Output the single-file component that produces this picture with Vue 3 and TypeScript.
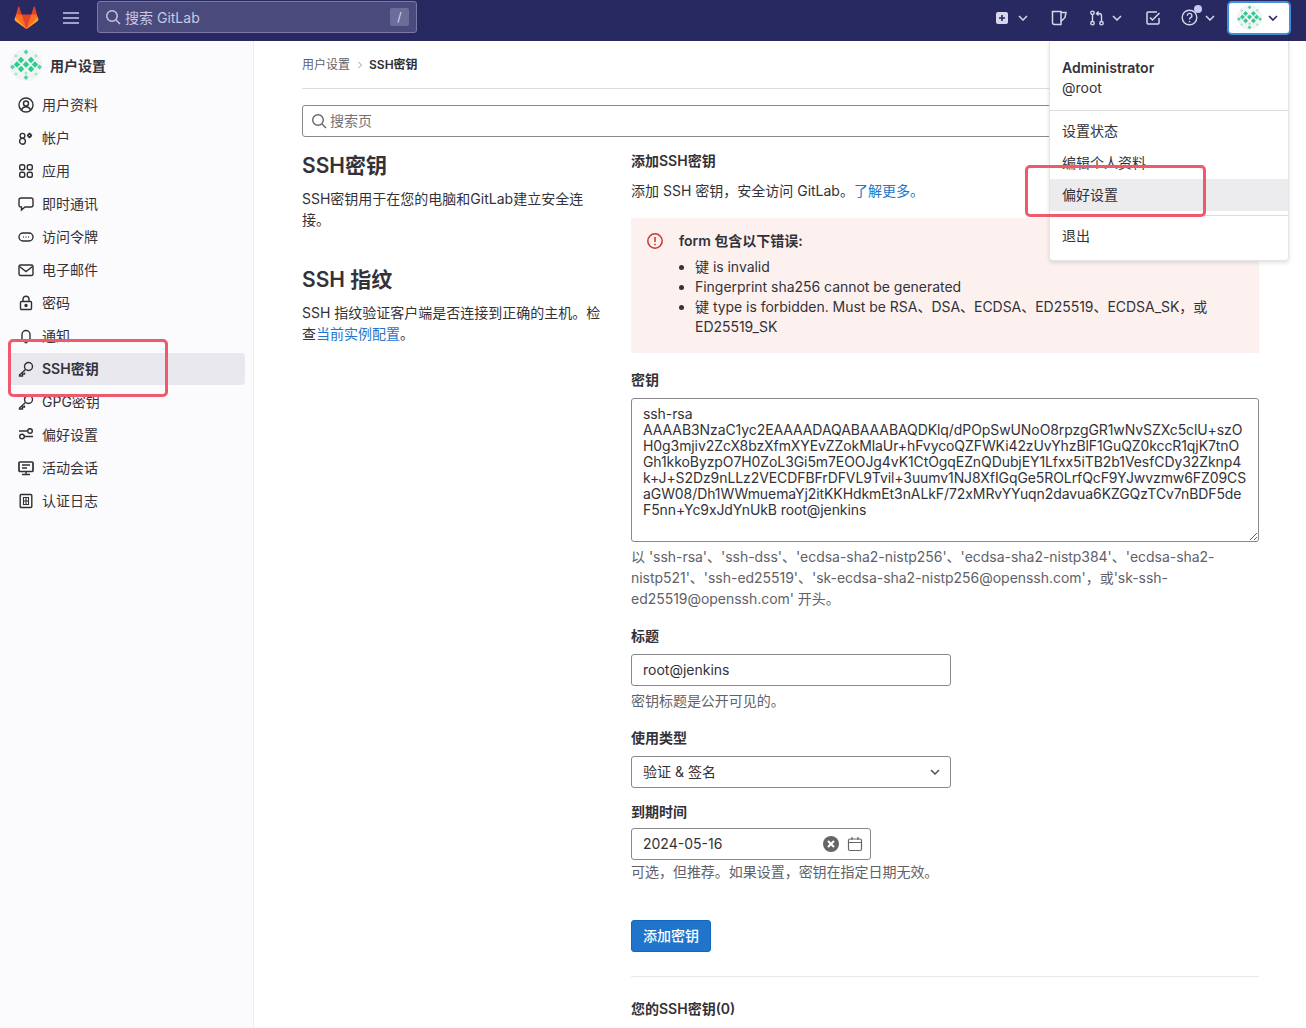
<script setup lang="ts">
const navItems: { label: string; icon: string; active?: boolean }[] = [
  { label: '用户资料', icon: 'profile' },
  { label: '帐户', icon: 'account' },
  { label: '应用', icon: 'apps' },
  { label: '即时通讯', icon: 'chat' },
  { label: '访问令牌', icon: 'token' },
  { label: '电子邮件', icon: 'mail' },
  { label: '密码', icon: 'lock' },
  { label: '通知', icon: 'bell' },
  { label: 'SSH密钥', icon: 'key', active: true },
  { label: 'GPG密钥', icon: 'key' },
  { label: '偏好设置', icon: 'prefs' },
  { label: '活动会话', icon: 'monitor' },
  { label: '认证日志', icon: 'log' },
]
const keyText = `ssh-rsa
AAAAB3NzaC1yc2EAAAADAQABAAABAQDKlq/dPOpSwUNoO8rpzgGR1wNvSZXc5clU+szO
H0g3mjiv2ZcX8bzXfmXYEvZZokMlaUr+hFvycoQZFWKi42zUvYhzBlF1GuQZ0kccR1qjK7tnO
Gh1kkoByzpO7H0ZoL3Gi5m7EOOJg4vK1CtOgqEZnQDubjEY1Lfxx5iTB2b1VesfCDy32Zknp4
k+J+S2Dz9nLLz2VECDFBFrDFVL9Tvil+3uumv1NJ8XfIGqGe5ROLrfQcF9YJwvzmw6FZ09CS
aGW08/Dh1WWmuemaYj2itKKHdkmEt3nALkF/72xMRvYYuqn2davua6KZGQzTCv7nBDF5de
F5nn+Yc9xJdYnUkB root@jenkins`

function diamond(x: number, y: number, r: number): string {
  return `${x},${y - r} ${x + r},${y} ${x},${y + r} ${x - r},${y}`
}
const avatarTiles: { pts: string; fill: string }[] = [
  ...[[11, 11], [21, 11], [11, 20], [21, 20], [16, 15.500], [7, 15.500], [25, 15.500]].map(([x, y]) => ({ pts: diamond(x, y, 3.200), fill: '#2ecb8f' })),
  ...[[16, 3], [16, 28.500], [2.500, 18], [29.500, 18]].map(([x, y]) => ({ pts: diamond(x, y, 2.400), fill: '#4fd3a2' })),
  ...[[6, 7], [26, 7], [6, 25], [26, 25], [16, 24]].map(([x, y]) => ({ pts: diamond(x, y, 1.800), fill: '#9be6c9' })),
]
</script>

<template>
  <div class="page">
    <header class="topbar">
      <svg class="logo" width="25" height="25" viewBox="0 0 26 26">
        <path d="M13 25 1.600 16.600c-.7-.5-1-1.400-.7-2.200L4.300 2c.2-.6 1-.6 1.200 0L8 10h10l2.500-8c.2-.6 1-.6 1.200 0l3.400 12.400c.3.800 0 1.700-.7 2.200z" fill="#e24329" />
        <path d="M13 25 8 10H2.500L.9 14.400c-.3.800 0 1.700.7 2.200zM13 25l5-15h5.500l1.600 4.400c.3.800 0 1.700-.7 2.200z" fill="#fc6d26" />
        <path d="M13 25 7.500 19 1 12.500l-.1 1.900c-.3.800 0 1.700.7 2.200zM13 25l5.500-6 6.500-6.500.1 1.900c.3.800 0 1.700-.7 2.200z" fill="#fca326" />
      </svg>
      <svg class="burger" width="16" height="12" viewBox="0 0 16 12"><path d="M0 1h16M0 6h16M0 11h16" stroke="#c9c9f2" stroke-width="1.500" /></svg>
      <div class="topsearch">
        <svg width="16" height="16" viewBox="0 0 16 16" fill="none" stroke="#c8c8e2" stroke-width="1.500"><circle cx="7" cy="7" r="5.250" /><path d="m11 11 4 4" /></svg>
        <span class="topsearch-text">搜索 GitLab</span>
        <span class="slash">/</span>
      </div>
      <div class="top-actions">
        <span class="act act-new"><svg width="14" height="14" viewBox="0 0 14 14"><rect x="1" y="1" width="12" height="12" rx="2" fill="#d6d6ec" /><path d="M7 4v6M4 7h6" stroke="#292961" stroke-width="1.600" /></svg><svg width="10" height="6" viewBox="0 0 10 6" fill="none" stroke="#d6d6ec" stroke-width="1.500"><path d="m1 1 4 4 4-4" /></svg></span>
        <span class="act act-issue"><svg width="16" height="16" viewBox="0 0 16 16" fill="none" stroke="#d6d6ec" stroke-width="1.500"><path d="M1.500 1.500h8.500v13H3.500a2 2 0 0 1-2-2zM10 2.500h5l-1 5-4 4" /></svg></span>
        <span class="act act-mr"><svg width="16" height="16" viewBox="0 0 16 16" fill="none" stroke="#d6d6ec" stroke-width="1.400"><circle cx="3.500" cy="2.800" r="1.700" /><circle cx="3.500" cy="13.200" r="1.700" /><circle cx="12.500" cy="13.200" r="1.700" /><path d="M3.500 4.500v7M12.500 11.500V6a2.500 2.500 0 0 0-2.500-2.500H7.500M9.500 1.500l-2 2 2 2" /></svg><svg width="10" height="6" viewBox="0 0 10 6" fill="none" stroke="#d6d6ec" stroke-width="1.500"><path d="m1 1 4 4 4-4" /></svg></span>
        <span class="act act-todo"><svg width="16" height="16" viewBox="0 0 16 16" fill="none" stroke="#d6d6ec" stroke-width="1.500"><path d="M14 8v5a1 1 0 0 1-1 1H3a1 1 0 0 1-1-1V3a1 1 0 0 1 1-1h9" /><path d="m5 7.500 2.500 2.500L14.500 3" /></svg></span>
        <span class="act act-help"><svg width="17" height="17" viewBox="0 0 17 17" fill="none" stroke="#d6d6ec" stroke-width="1.400"><circle cx="8.500" cy="8.500" r="7.300" /><path d="M6.300 6.700a2.300 2.300 0 1 1 3.400 2c-.8.500-1.200.9-1.200 1.800M8.500 12v1.300" /></svg><i class="help-dot"></i><svg width="10" height="6" viewBox="0 0 10 6" fill="none" stroke="#d6d6ec" stroke-width="1.500"><path d="m1 1 4 4 4-4" /></svg></span>
        <span class="userbtn">
          <svg width="25" height="25" viewBox="0 0 32 32"><circle cx="16" cy="16" r="16" fill="#f1f4f3" /><polygon v-for="(t, i) in avatarTiles" :key="i" :points="t.pts" :fill="t.fill" /></svg>
          <svg width="10" height="6" viewBox="0 0 10 6" fill="none" stroke="#292961" stroke-width="1.600"><path d="m1 1 4 4 4-4" /></svg>
        </span>
      </div>
    </header>

    <div class="shell">
      <aside class="sidebar">
        <div class="side-head">
          <svg width="32" height="32" viewBox="0 0 32 32"><circle cx="16" cy="16" r="16" fill="#f1f4f3" /><polygon v-for="(t, i) in avatarTiles" :key="i" :points="t.pts" :fill="t.fill" /></svg>
          <strong>用户设置</strong>
        </div>
        <nav class="nav">
          <a v-for="item in navItems" :key="item.label" class="nav-item" :class="{ active: item.active }">
            <svg width="16" height="16" viewBox="0 0 16 16" fill="none" stroke="#303030" stroke-width="1.400">
              <template v-if="item.icon === 'profile'"><circle cx="8" cy="8" r="7" /><circle cx="8" cy="6.500" r="2.500" /><path d="M3.500 13c.8-2.200 2.300-3.200 4.500-3.200s3.700 1 4.500 3.200" /></template>
              <template v-else-if="item.icon === 'account'"><circle cx="4.500" cy="5.800" r="2.400" /><circle cx="4.500" cy="11.300" r="2.900" /><circle cx="11.500" cy="5.500" r="1.500" fill="#fbfafd" stroke-width="1.800" /><path d="M11.500 2.700v1M11.500 7.300v1M8.900 5.500h1M13.100 5.500h1" stroke-width="1.100" /></template>
              <template v-else-if="item.icon === 'apps'"><rect x="1.700" y="1.700" width="5" height="5" rx="1.800" /><rect x="9.300" y="1.700" width="5" height="5" rx="1.800" /><rect x="1.700" y="9.300" width="5" height="5" rx="1.800" /><rect x="9.300" y="9.300" width="5" height="5" rx="1.800" /></template>
              <template v-else-if="item.icon === 'chat'"><path d="M3 2h10a2 2 0 0 1 2 2v5a2 2 0 0 1-2 2H7l-3.500 3v-3H3a2 2 0 0 1-2-2V4a2 2 0 0 1 2-2z" /></template>
              <template v-else-if="item.icon === 'token'"><rect x="1" y="4" width="14" height="8" rx="4" /><path d="M5 8h.8M7.600 8h.8M10.200 8h.8" stroke-width="1.600" /></template>
              <template v-else-if="item.icon === 'mail'"><rect x="1" y="3" width="14" height="10.500" rx="1.500" /><path d="m1.500 4.500 6.500 5 6.500-5" /></template>
              <template v-else-if="item.icon === 'lock'"><rect x="2.500" y="6.500" width="11" height="8" rx="1" /><path d="M5 6.500V4.200a3 3 0 0 1 6 0v2.300" /><circle cx="8" cy="10.500" r="1" fill="#303030" /></template>
              <template v-else-if="item.icon === 'bell'"><path d="M4 11V6.500a4 4 0 0 1 8 0V11l1 1.500H3zM6.500 14.500h3" /></template>
              <template v-else-if="item.icon === 'key'"><circle cx="10.500" cy="5.500" r="4" /><path d="m7.500 8.500-6 5.500v1h3v-2h2v-1.500" /></template>
              <template v-else-if="item.icon === 'prefs'"><circle cx="12" cy="4" r="2.300" /><circle cx="4" cy="9.500" r="2.300" /><path d="M1 4h8.700M6.300 9.500H15" /></template>
              <template v-else-if="item.icon === 'monitor'"><rect x="1" y="2" width="14" height="9.500" rx="1" stroke-width="1.700" /><path d="M4 14.500h8M8 11.500v3M4 5h8M4 8h5" /></template>
              <template v-else><rect x="2.200" y="1.500" width="11.600" height="13" rx="1" /><path d="M5.500 4.500h5v7h-5zM5.500 8h5M8 4.500v7" stroke-width="1.100" /></template>
            </svg>
            <span>{{ item.label }}</span>
          </a>
        </nav>
      </aside>

      <main class="main">
        <div class="crumbs">
          <span>用户设置</span>
          <svg width="6" height="8" viewBox="0 0 6 8" fill="none" stroke="#9a9a9a" stroke-width="1"><path d="m1.500 1 3 3-3 3" /></svg>
          <strong>SSH密钥</strong>
        </div>
        <div class="pagesearch">
          <svg width="16" height="16" viewBox="0 0 16 16" fill="none" stroke="#666" stroke-width="1.400"><circle cx="7" cy="7" r="5.300" /><path d="m11 11 4 4" /></svg>
          <span>搜索页</span>
        </div>
        <div class="columns">
          <section class="intro">
            <h2>SSH密钥</h2>
            <p>SSH密钥用于在您的电脑和GitLab建立安全连接。</p>
            <h2 class="second">SSH 指纹</h2>
            <p>SSH 指纹验证客户端是否连接到正确的主机。检查<a>当前实例配置</a>。</p>
          </section>
          <section class="form">
            <h3>添加SSH密钥</h3>
            <p class="lead">添加 SSH 密钥，安全访问 GitLab。<a>了解更多。</a></p>
            <div class="alert">
              <svg width="16" height="16" viewBox="0 0 16 16" fill="none" stroke="#c9362f" stroke-width="1.500"><circle cx="8" cy="8" r="7.200" /><path d="M8 4v5M8 10.800v1.400" /></svg>
              <div class="alert-body">
                <strong>form 包含以下错误:</strong>
                <ul>
                  <li>键 is invalid</li>
                  <li>Fingerprint sha256 cannot be generated</li>
                  <li>键 type is forbidden. Must be RSA、DSA、ECDSA、ED25519、ECDSA_SK，或 ED25519_SK</li>
                </ul>
              </div>
            </div>
            <label class="label key-label">密钥</label>
            <textarea class="keybox" readonly :value="keyText" wrap="off"></textarea>
            <p class="help">以 'ssh-rsa'、'ssh-dss'、'ecdsa-sha2-nistp256'、'ecdsa-sha2-nistp384'、'ecdsa-sha2-nistp521'、'ssh-ed25519'、'sk-ecdsa-sha2-nistp256@openssh.com'，或'sk-ssh-ed25519@openssh.com' 开头。</p>
            <label class="label title-label">标题</label>
            <div class="field w320">root@jenkins</div>
            <p class="help tight">密钥标题是公开可见的。</p>
            <label class="label use-label">使用类型</label>
            <div class="field w320 select">
              <span>验证 &amp; 签名</span>
              <svg width="10" height="6" viewBox="0 0 10 6" fill="none" stroke="#555" stroke-width="1.500"><path d="m1 1 4 4 4-4" /></svg>
            </div>
            <label class="label exp-label">到期时间</label>
            <div class="field w240 date">
              <span class="date-text">2024-05-16</span>
              <svg width="16" height="16" viewBox="0 0 16 16"><circle cx="8" cy="8" r="8" fill="#666" /><path d="m5 5 6 6M11 5l-6 6" stroke="#fff" stroke-width="2" /></svg>
              <svg width="16" height="16" viewBox="0 0 16 16" fill="none" stroke="#666" stroke-width="1.200"><rect x="1.500" y="3" width="13" height="11.500" rx="1.500" /><path d="M1.500 6.500h13M5 1v3M11 1v3" /></svg>
            </div>
            <p class="help date-help">可选，但推荐。如果设置，密钥在指定日期无效。</p>
            <button class="submit" type="button">添加密钥</button>
            <hr />
            <h3 class="yours">您的SSH密钥(0)</h3>
          </section>
        </div>
      </main>
    </div>

    <div class="menu">
      <div class="menu-user">
        <strong>Administrator</strong>
        <span>@root</span>
      </div>
      <div class="menu-group">
        <a>设置状态</a>
        <a>编辑个人资料</a>
        <a class="hover">偏好设置</a>
      </div>
      <div class="menu-group last">
        <a>退出</a>
      </div>
    </div>
    <div class="mark mark-side"></div>
    <div class="mark mark-menu"></div>
  </div>
</template>

<style>
body { margin: 0; background: #fff; }
</style>

<style scoped>
.page {
  position: relative;
  height: 1028px;
  overflow: hidden;
  font: 14px/20px Inter, "Noto Sans CJK SC", sans-serif;
  color: #333238;
  background: #fff;
}
.topbar {
  height: 41px;
  background: #292961;
  display: flex;
  align-items: center;
  padding-left: 14px;
  box-sizing: border-box;
}
.logo { margin-top: -7px; }
.burger { margin-left: 24px; margin-top: -6px; }
.topsearch {
  margin-left: 18px;
  width: 320px;
  height: 32px;
  margin-top: -7px;
  box-sizing: border-box;
  border: 1px solid #7a7aa8;
  border-radius: 3px;
  background: #4a4a7c;
  display: flex;
  align-items: center;
  padding: 0 7px;
  color: #c8c8e2;
}
.topsearch-text { margin-left: 4px; margin-top: 1px; flex: 1; }
.slash {
  width: 19px;
  height: 18px;
  border-radius: 2px;
  background: #6d6d9c;
  text-align: center;
  line-height: 18px;
  font-size: 12px;
  color: #dcdcf0;
}
.top-actions {
  margin-left: auto;
  display: flex;
  align-items: center;
  height: 35px;
  margin-top: -6px;
}
.act { position: relative; display: flex; align-items: center; }
.act-new { gap: 9px; margin-right: 23px; }
.act-issue { margin-right: 22px; }
.act-mr { gap: 7px; margin-right: 23px; }
.act-todo { margin-right: 20px; }
.act-help { gap: 7px; margin-right: 12px; }
.help-dot {
  position: absolute;
  left: 13px;
  top: -4px;
  width: 8px;
  height: 8px;
  border-radius: 50%;
  background: #c9c9f0;
}
.userbtn {
  width: 64px;
  height: 34px;
  box-sizing: border-box;
  margin-right: 15px;
  background: #fff;
  border: 2px solid #428fdc;
  border-radius: 5px;
  display: flex;
  align-items: center;
  padding-left: 8px;
  gap: 6px;
}
.shell { display: flex; height: 987px; }
.sidebar {
  width: 254px;
  flex: none;
  box-sizing: border-box;
  background: #fbfafd;
  border-right: 1px solid #ececef;
  padding: 8px 8px 0 9px;
}
.side-head {
  display: flex;
  align-items: center;
  height: 32px;
  gap: 8px;
  margin-bottom: 8px;
  margin-left: 1px;
}
.side-head strong { font-weight: 600; margin-top: 2px; }
.nav { display: flex; flex-direction: column; gap: 1px; }
.nav-item {
  height: 32px;
  display: flex;
  align-items: center;
  gap: 8px;
  padding-left: 9px;
  border-radius: 4px;
  color: #333238;
}
.nav-item.active { background: #e9e8ee; font-weight: 600; }
.main { flex: 1; min-width: 0; padding: 0 47px 0 48px; }
.crumbs {
  height: 47px;
  border-bottom: 1px solid #dcdcde;
  display: flex;
  align-items: center;
  gap: 6.500px;
  font-size: 12px;
  color: #626168;
}
.crumbs strong { color: #303030; font-weight: 600; }
.pagesearch {
  margin-top: 16px;
  height: 32px;
  box-sizing: border-box;
  border: 1px solid #89888d;
  border-radius: 3px;
  display: flex;
  align-items: center;
  gap: 3px;
  padding-left: 8px;
  color: #737278;
}
.columns { display: flex; gap: 25px; margin-top: 16px; }
.intro { width: 304px; flex: none; }
.form { flex: 1; min-width: 0; }
h2 { margin: 0; font-size: 21px; line-height: 26px; font-weight: 600; color: #333238; }
.intro p { margin: 9px 0 0; line-height: 21px; }
.intro h2.second { margin-top: 37px; }
a { color: #1f75cb; }
.nav-item, .menu a { color: #333238; }
h3 { margin: 0; font-size: 14px; line-height: 16px; font-weight: 600; }
.lead { margin: 12px 0 0; }
.alert {
  margin-top: 17px;
  background: #fcf1ef;
  padding: 15px 16px 16px;
  height: 135px;
  box-sizing: border-box;
  display: flex;
  gap: 16px;
}
.alert > svg { flex: none; }
.alert-body { flex: 1; margin-top: -2px; letter-spacing: -0.03px; }
.alert-body strong { font-weight: 600; }
.alert-body ul { margin: 6px 0 0; padding-left: 16px; }
.label { display: block; font-weight: 600; line-height: 16px; }
.key-label { margin-top: 19px; }
.keybox {
  display: block;
  width: 100%;
  height: 144px;
  margin-top: 10px;
  box-sizing: border-box;
  border: 1px solid #89888d;
  border-radius: 3px;
  padding: 7px 11px;
  font: 14px/16px Inter, "Noto Sans CJK SC", sans-serif;
  letter-spacing: -0.085px;
  color: #333238;
  white-space: pre;
  overflow: hidden;
  outline: none;
  background: #fff;
}
.help { margin: 4px 0 0; line-height: 21px; color: #626168; letter-spacing: -0.03px; }
.help.tight { line-height: 20px; margin-top: 5px; }
.date-help { line-height: 20px; margin-top: 2px; }
.title-label { margin-top: 19px; }
.field {
  margin-top: 10px;
  height: 32px;
  box-sizing: border-box;
  border: 1px solid #89888d;
  border-radius: 3px;
  display: flex;
  align-items: center;
  padding: 0 11px;
}
.w320 { width: 320px; }
.w240 { width: 240px; }
.select { justify-content: space-between; padding-right: 10px; }
.use-label { margin-top: 19px; }
.exp-label { margin-top: 16px; }
.date { gap: 8px; padding-right: 7px; margin-top: 8px; }
.date-text { flex: 1; }
.submit {
  display: block;
  margin-top: 38px;
  width: 80px;
  height: 32px;
  border: 1px solid #1068bf;
  border-radius: 3px;
  background: #1f75cb;
  color: #fff;
  font: 500 14px/20px Inter, "Noto Sans CJK SC", sans-serif;
  padding: 0;
}
hr { border: 0; border-top: 1px solid #e9e9ec; margin: 24px 0 0; }
.yours { margin-top: 24px; }
.menu {
  position: absolute;
  left: 1049px;
  top: 41px;
  width: 240px;
  height: 220px;
  box-sizing: border-box;
  background: #fff;
  border: 1px solid #e4e4e7;
  border-top: 0;
  border-radius: 0 0 4px 4px;
  box-shadow: 0 2px 4px rgba(0, 0, 0, 0.12);
}
.menu-user {
  height: 70px;
  box-sizing: border-box;
  padding: 17px 12px 0;
  border-bottom: 1px solid #dcdcde;
  display: flex;
  flex-direction: column;
}
.menu-user strong { font-weight: 600; }
.menu-group { padding: 4px 0; border-bottom: 1px solid #dcdcde; }
.menu-group a {
  display: block;
  height: 32px;
  line-height: 32px;
  padding-left: 12px;
}
.menu-group a.hover { background: #ececef; }
.menu-group.last { border: 0; }
.mark {
  position: absolute;
  box-sizing: border-box;
  border: 3px solid #ee5a6c;
  border-radius: 5px;
}
.mark-side { left: 8px; top: 339px; width: 160px; height: 58px; }
.mark-menu { left: 1025px; top: 165px; width: 181px; height: 52px; }
</style>
